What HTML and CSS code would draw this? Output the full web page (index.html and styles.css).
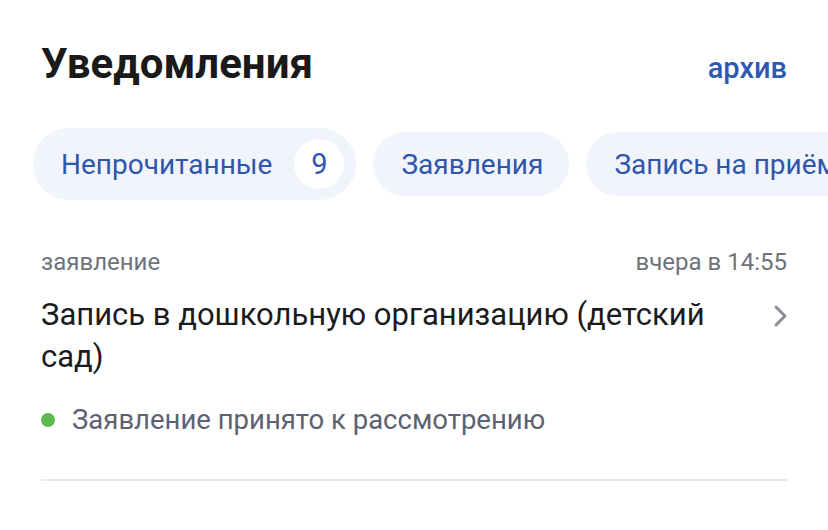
FILE: index.html
```html
<!DOCTYPE html>
<html lang="ru">
<head>
  <meta charset="UTF-8">
  <meta name="viewport" content="width=device-width, initial-scale=1.0">
  <link rel="stylesheet" href="styles.css">
</head>
<body>
  <div class="card">
    <div class="header">
      <h1 class="title">Уведомления</h1>
      <a class="archive" href="#">архив</a>
    </div>

    <div class="chips">
      <div class="chip chip-badge">Непрочитанные <span class="badge">9</span></div>
      <div class="chip">Заявления</div>
      <div class="chip">Запись на приём</div>
    </div>

    <div class="item">
      <div class="meta">
        <span>заявление</span>
        <span>вчера в 14:55</span>
      </div>
      <div class="item-body">
        <div class="item-title">Запись в дошкольную организацию (детский сад)</div>
        <svg class="chevron" width="16" height="24" viewBox="0 0 16 24">
          <path d="M3 3 L12 12 L3 21" fill="none" stroke="#8a8e97" stroke-width="3" stroke-linecap="round" stroke-linejoin="round"/>
        </svg>
      </div>
      <div class="status"><span class="dot"></span>Заявление принято к рассмотрению</div>
    </div>

    <div class="item item-next">
      <div class="meta">
        <span>заявление</span>
        <span>12 марта в 10:42</span>
      </div>
    </div>
  </div>
</body>
</html>
```

FILE: styles.css
```css
body {
  margin: 0;
  background: #ffffff;
  font-family: Roboto, "Liberation Sans", sans-serif;
  overflow: hidden;
  height: 530px;
}

.card {
  background: #ffffff;
  border-radius: 28px;
  padding: 0 41px;
}

.header {
  display: flex;
  justify-content: space-between;
  align-items: baseline;
  padding-top: 36px;
}

.title {
  margin: 0;
  font-size: 42px;
  line-height: 56px;
  font-weight: 700;
  color: #1a1a1a;
}

.archive {
  font-size: 29px;
  font-weight: 500;
  color: #2f58b4;
  text-decoration: none;
}

.chips {
  display: flex;
  align-items: center;
  gap: 17px;
  margin: 36px -41px 0 -8px;
  white-space: nowrap;
  overflow: hidden;
}

.chip {
  flex: none;
  display: flex;
  align-items: center;
  height: 64px;
  padding: 0 26px 0 28px;
  border-radius: 32px;
  background: #f1f4fa;
  color: #2f56ad;
  font-size: 28px;
}

.chip-badge {
  height: 72px;
  border-radius: 36px;
  padding-right: 12px;
}

.badge {
  display: flex;
  align-items: center;
  justify-content: center;
  width: 50px;
  height: 50px;
  margin-left: 22px;
  border-radius: 50%;
  background: #ffffff;
  font-size: 29px;
}

.item {
  padding-top: 48px;
}

.item-next {
  padding-top: 44px;
}

.meta {
  display: flex;
  justify-content: space-between;
  font-size: 24px;
  color: #6f727a;
  line-height: 28px;
}

.item-body {
  display: flex;
  justify-content: space-between;
  align-items: flex-start;
  gap: 40px;
  margin-top: 18px;
}

.item-title {
  font-size: 31px;
  line-height: 42px;
  color: #1b1b1b;
}

.chevron {
  flex: none;
  margin-top: 10px;
  margin-right: -2px;
}

.status {
  display: flex;
  align-items: center;
  margin-top: 26px;
  padding-bottom: 43px;
  border-bottom: 2px solid #e8e9eb;
  font-size: 27.5px;
  line-height: 32px;
  color: #5c6271;
}

.dot {
  width: 14px;
  height: 14px;
  border-radius: 50%;
  background: #5dbb4e;
  margin-right: 17px;
}
```
